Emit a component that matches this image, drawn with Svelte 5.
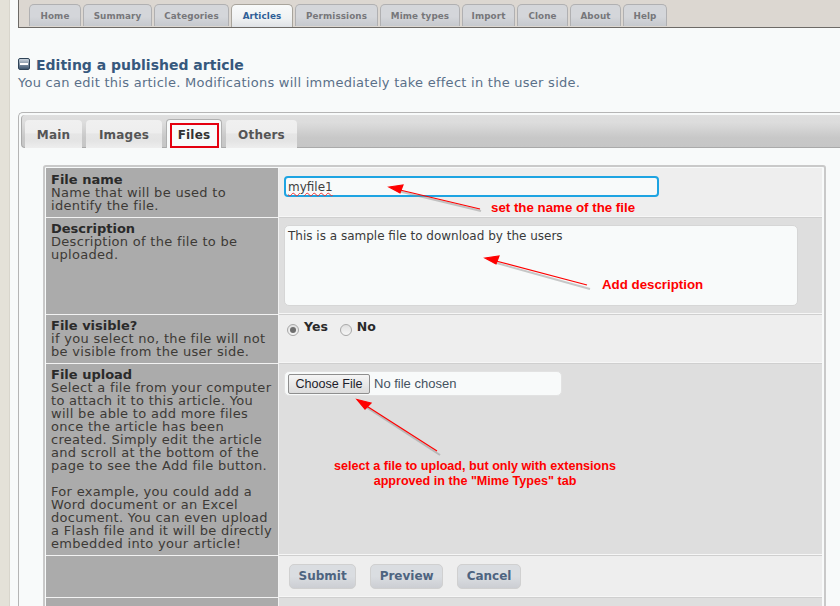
<script>
  const navTabs = [
    ['Home', 52], ['Summary', 69], ['Categories', 75], ['Articles', 62, true], ['Permissions', 83],
    ['Mime types', 80], ['Import', 53], ['Clone', 51], ['About', 51], ['Help', 44]
  ];
  const subTabs = [['Main', 57], ['Images', 76], ['Files', 56, true], ['Others', 71]];
</script>

<div class="page">
  <aside class="strip"></aside>
  <main class="main">
    <header class="top">
      <nav class="nav">
        {#each navTabs as [label, w, active]}
          <span class="navtab" class:active style="width:{w}px">{label}</span>
        {/each}
      </nav>
    </header>

    <section class="intro">
      <h1><span class="minus"><i></i></span>Editing a published article</h1>
      <p>You can edit this article. Modifications will immediately take effect in the user side.</p>
    </section>

    <section class="panel">
      <div class="tabbar">
        {#each subTabs as [label, w, active]}
          <span class="subtab" class:active style="width:{w}px">{label}</span>
        {/each}
      </div>

      <div class="formwrap">
        <table class="form">
          <tbody>
            <tr class="r1 odd">
              <th><b>File name</b><br />Name that will be used to identify the file.</th>
              <td><div class="input focus"><span class="squiggle">myfile1</span></div></td>
            </tr>
            <tr class="r2 even">
              <th><b>Description</b><br />Description of the file to be uploaded.</th>
              <td><div class="textarea">This is a sample file to download by the users</div></td>
            </tr>
            <tr class="r3 odd">
              <th><b>File visible?</b><br />if you select no, the file will not be visible from the user side.</th>
              <td class="radios">
                <span class="radio on"></span><b>Yes</b>
                <span class="radio"></span><b>No</b>
              </td>
            </tr>
            <tr class="r4 even">
              <th><b>File upload</b><br />Select a file from your computer to attach it to this article. You will be able to add more files once the article has been created. Simply edit the article and scroll at the bottom of the page to see the Add file button.<br /><br />For example, you could add a Word document or an Excel document. You can even upload a Flash file and it will be directly embedded into your article!</th>
              <td><div class="file"><span class="choose">Choose File</span><span>No file chosen</span></div></td>
            </tr>
            <tr class="r5 odd">
              <th></th>
              <td class="actions"><span class="btn">Submit</span><span class="btn">Preview</span><span class="btn">Cancel</span></td>
            </tr>
            <tr class="r6 even"><th></th><td></td></tr>
          </tbody>
        </table>
      </div>
    </section>
  </main>

  <svg class="arrows" width="840" height="606" viewBox="0 0 840 606" aria-hidden="true">
    <g fill="none" stroke="#8a8a8a" stroke-opacity=".45" stroke-width="2">
      <path d="M398 191 L481 211" />
      <path d="M493 262 L590 289" />
      <path d="M366 407 L440 455" />
    </g>
    <g fill="#fe0000" stroke="#fe0000" stroke-width="1.2">
      <path d="M480 209 L400 190" fill="none" />
      <polygon points="389,187 403,185 400,193" />
      <path d="M587 285 L496 261" fill="none" />
      <polygon points="485,258 499,256 496,264" />
      <path d="M437 451 L365 405" fill="none" />
      <polygon points="357,399.500 371,403 365,409" />
    </g>
  </svg>
  <div class="note n1">set the name of the file</div>
  <div class="note n2">Add description</div>
  <div class="note n3">select a file to upload, but only with extensions<br />approved in the "Mime Types" tab</div>
</div>

<style>
  :global(body) { margin: 0; background: #f8fafa; }
  .page {
    position: relative;
    width: 840px;
    height: 606px;
    overflow: hidden;
    display: flex;
    font-family: "DejaVu Sans", Verdana, sans-serif;
    background: #f8fafa;
  }
  .strip {
    width: 9px;
    flex: none;
    background: #e4e1d8;
    border-right: 1px solid #d8d5cc;
  }
  .main { flex: 1; min-width: 0; padding-left: 8px; }
  .top {
    height: 27px;
    background: #dcd7d1;
    border-left: 1px solid #6d6a66;
    border-bottom: 1px solid #6d6a66;
    padding-left: 10px;
    display: flex;
    align-items: flex-end;
  }
  .nav { display: flex; gap: 2px; }
  .navtab {
    box-sizing: border-box;
    height: 22px;
    border: 1px solid #b0b0b2;
    border-bottom: 0;
    border-radius: 5px 5px 0 0;
    background: linear-gradient(#d4d6da 0, #d4d6da 55%, #c6c9ce 100%);
    color: #77777a;
    font-size: 8.8px;
    font-weight: 700;
    letter-spacing: .1px;
    text-align: center;
    line-height: 22px;
    white-space: nowrap;
  }
  .navtab.active {
    background: linear-gradient(#f8fafa 0, #f0f2f3 60%, #dfe2e6 100%);
    color: #2f5f97;
    border-color: #a8a49c;
    height: 23px;
  }
  .intro { padding: 28px 0 0 0; }
  h1 {
    margin: 0;
    font-size: 14px;
    line-height: 19px;
    font-weight: 700;
    color: #36587d;
    display: flex;
    align-items: center;
  }
  .minus {
    width: 12px; height: 12px;
    margin-right: 6px;
    margin-top: -3px;
    box-sizing: border-box;
    background: linear-gradient(#c9d2dc, #3d556f);
    border: 1px solid #2f4357;
    border-radius: 2px;
    display: flex; align-items: center; justify-content: center;
  }
  .minus i { width: 8px; height: 2px; background: #fff; display: block; }
  .intro p {
    margin: 0;
    font-size: 13px;
    line-height: 16px;
    color: #5a7089;
    letter-spacing: .26px;
  }
  .panel {
    margin: 21px 0 0 0;
    border: 1px solid #b5b5b5;
    border-right: 0;
    border-radius: 5px 0 0 0;
    padding: 2px 0 0 2px;
    height: 600px;
    box-sizing: border-box;
    width: 823px;
  }
  .tabbar {
    height: 33px;
    box-sizing: border-box;
    background: linear-gradient(#dfdfdf 0, #dcdcdc 25%, #c8c8c8 70%, #c6c6c6 100%);
    border-bottom: 1px solid #aaa;
    border-left: 1px solid #aaa;
    border-radius: 4px 0 0 4px;
    padding: 5px 0 0 3px;
    display: flex;
    gap: 4px;
  }
  .subtab {
    box-sizing: border-box;
    height: 28px;
    border-radius: 4px 4px 0 0;
    background: linear-gradient(#f0f0f0 0, #eeeeee 45%, #e6e6e6 50%, #e4e4e4 75%, #eeeeee 100%);
    color: #555;
    font-size: 12px;
    font-weight: 700;
    text-align: center;
    line-height: 31px;
    letter-spacing: .2px;
  }
  .subtab.active {
    background: #f8fafa;
    color: #333;
    border: 1px solid #b0b0b0;
    border-bottom: 0;
    height: 29px;
    margin-top: -1px;
    position: relative;
    line-height: 31px;
  }
  .subtab.active::after {
    content: "";
    position: absolute;
    left: 3px; right: 2px; top: 3px; height: 25px;
    border: 2px solid #e4000f;
    box-sizing: border-box;
  }
  .formwrap {
    margin: 17px 0 0 22px;
    width: 783px;
    box-sizing: border-box;
    border: 2px solid #c9c9c9;
    border-radius: 3px 3px 0 0;
    padding: 1px 2px 0 1px;
  }
  .form {
    width: 100%;
    table-layout: fixed;
    border-collapse: collapse;
    font-size: 13px;
    line-height: 13px;
  }
  .form th {
    width: 224px;
    box-sizing: content-box;
    background: #ababab;
    color: #3d3a36;
    font-weight: 400;
    text-align: left;
    vertical-align: top;
    padding: 5px 3px 0 5px;
    border-bottom: 1px solid #f2f2f2;
    border-right: 1px solid #f2f2f2;
    letter-spacing: .3px;
  }
  .form tr.r2 th, .form tr.r3 th, .form tr.r4 th { padding-top: 4px; }
  .form th b { color: #2a2a2a; letter-spacing: 0; }
  .form td {
    vertical-align: top;
    padding: 0;
    border-bottom: 1px solid #cfcfcf;
    box-shadow: inset 0 -1px 0 #f6f6f6;
    color: #333;
  }
  tr.odd td { background: #eeeeee; }
  tr.even td { background: #dedede; }
  .r1 th, .r1 td { height: 44px; }
  .r2 th, .r2 td { height: 92px; }
  .r3 th, .r3 td { height: 43px; }
  .r4 th, .r4 td { height: 187px; }
  .r5 th, .r5 td { height: 33px; }
  .r6 th, .r6 td { height: 20px; }

  .input {
    margin: 8px 0 0 5px;
    width: 375px;
    height: 21px;
    box-sizing: border-box;
    background: #f8fafa;
    border: 2px solid #1ea4e2;
    border-radius: 4px;
    font-size: 12px;
    line-height: 18px;
    padding-left: 2px;
    color: #404040;
  }
  .squiggle {
    text-decoration: underline wavy #e33;
    text-decoration-thickness: 1px;
    text-underline-offset: 1px;
  }
  .textarea {
    margin: 7px 0 0 5px;
    width: 514px;
    height: 81px;
    box-sizing: border-box;
    background: #f8fafa;
    border: 1px solid #d6d6d6;
    border-radius: 5px;
    font-size: 12px;
    line-height: 16px;
    padding: 2px 3px;
    color: #3a3a3a;
  }
  .radios { padding: 5px 0 0 8px !important; font-size: 12.5px; color: #2a2a2a !important; }
  .radios b { color: #2a2a2a; margin-right: 8px; vertical-align: 4px; }
  .radio {
    display: inline-block;
    width: 12px; height: 12px;
    box-sizing: border-box;
    border-radius: 50%;
    border: 1px solid #a8a8a8;
    background: linear-gradient(#e0e0e0, #f6f6f6);
    margin-right: 5px;
    position: relative;
    vertical-align: -1px;
  }
  .radio.on::after {
    content: "";
    position: absolute;
    left: 2px; top: 2px;
    width: 6px; height: 6px;
    border-radius: 50%;
    background: #6e6e6e;
  }
  .file {
    margin: 7px 0 0 5px;
    width: 278px;
    height: 25px;
    box-sizing: border-box;
    background: #f8fafa;
    border: 1px solid #e2e2e2;
    border-radius: 5px;
    padding: 1px 3px;
    display: flex;
    align-items: center;
    gap: 4px;
    font-family: "Liberation Sans", Arial, sans-serif;
    font-size: 13px;
    color: #44525f;
  }
  .choose {
    box-sizing: border-box;
    width: 82px;
    height: 20px;
    text-align: center;
    line-height: 18px;
    font-size: 12.6px;
    border: 1px solid #8e8e8e;
    border-radius: 2px;
    background: linear-gradient(#f5f5f5, #dcdcdc);
    color: #1c1c2a;
  }
  .actions { padding: 8px 0 0 10px !important; }
  .btn {
    display: inline-block;
    box-sizing: border-box;
    height: 25px;
    padding: 0 8.500px;
    margin-right: 14px;
    border: 1px solid #d0d0d0;
    border-radius: 5px;
    background: linear-gradient(#dadde1 0, #dadde1 50%, #ccced3 100%);
    color: #4e6480;
    font-size: 12px;
    font-weight: 700;
    line-height: 23px;
  }
  .arrows { position: absolute; left: 0; top: 0; pointer-events: none; }
  .note {
    position: absolute;
    color: #fe0000;
    font-family: "Liberation Sans", Arial, sans-serif;
    font-weight: 700;
    font-size: 13.3px;
    line-height: 15px;
    white-space: nowrap;
    text-align: center;
  }
  .n1 { left: 491px; top: 200px; }
  .n2 { left: 602px; top: 277px; }
  .n3 { left: 334px; top: 459px; font-size: 12.6px; }
</style>
